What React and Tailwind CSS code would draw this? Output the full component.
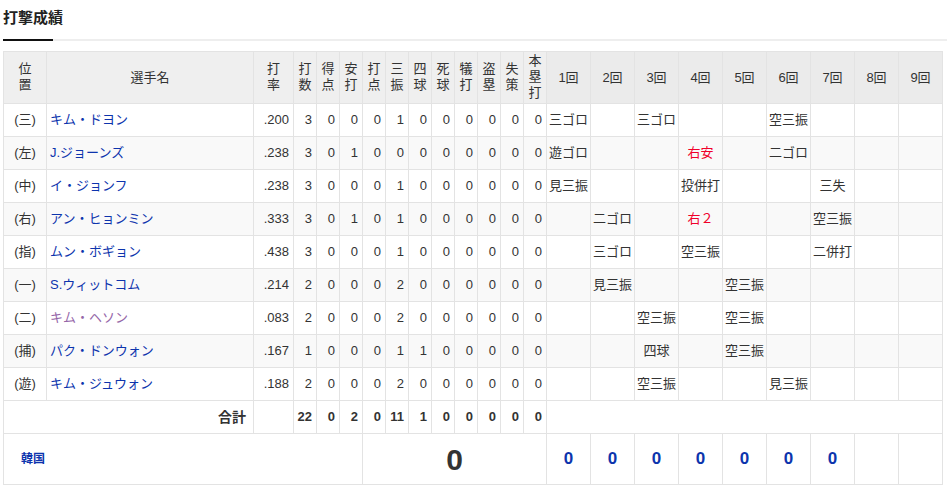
import React from 'react';

const FONT = { fontFamily: '"Liberation Sans", "Noto Sans CJK JP", sans-serif' };

const statHeads = ['打数', '得点', '安打', '打点', '三振', '四球', '死球', '犠打', '盗塁', '失策', '本塁打'];

// pos, name, avg, stats[11], innings {n: text ('*' = red)}, visited
const players = [
  ['(三)', 'キム・ドヨン', '.200', [3, 0, 0, 0, 1, 0, 0, 0, 0, 0, 0], { 1: '三ゴロ', 3: '三ゴロ', 6: '空三振' }],
  ['(左)', 'J.ジョーンズ', '.238', [3, 0, 1, 0, 0, 0, 0, 0, 0, 0, 0], { 1: '遊ゴロ', 4: '*右安', 6: '二ゴロ' }],
  ['(中)', 'イ・ジョンフ', '.238', [3, 0, 0, 0, 1, 0, 0, 0, 0, 0, 0], { 1: '見三振', 4: '投併打', 7: '三失' }],
  ['(右)', 'アン・ヒョンミン', '.333', [3, 0, 1, 0, 1, 0, 0, 0, 0, 0, 0], { 2: '二ゴロ', 4: '*右２', 7: '空三振' }],
  ['(指)', 'ムン・ボギョン', '.438', [3, 0, 0, 0, 1, 0, 0, 0, 0, 0, 0], { 2: '三ゴロ', 4: '空三振', 7: '二併打' }],
  ['(一)', 'S.ウィットコム', '.214', [2, 0, 0, 0, 2, 0, 0, 0, 0, 0, 0], { 2: '見三振', 5: '空三振' }],
  ['(二)', 'キム・ヘソン', '.083', [2, 0, 0, 0, 2, 0, 0, 0, 0, 0, 0], { 3: '空三振', 5: '空三振' }, true],
  ['(捕)', 'パク・ドンウォン', '.167', [1, 0, 0, 0, 1, 1, 0, 0, 0, 0, 0], { 3: '四球', 5: '空三振' }],
  ['(遊)', 'キム・ジュウォン', '.188', [2, 0, 0, 0, 2, 0, 0, 0, 0, 0, 0], { 3: '空三振', 6: '見三振' }],
];

const totals = [22, 0, 2, 0, 11, 1, 0, 0, 0, 0, 0];
const innings = [1, 2, 3, 4, 5, 6, 7, 8, 9];
const runs = ['0', '0', '0', '0', '0', '0', '0', '', ''];

const cell = 'border border-[#e3e3e3]';

function Stacked({ text }) {
  return (
    <span className="inline-block leading-[16px]">
      {text.split('').map((c, i) => (
        <span key={i} className="block">{c}</span>
      ))}
    </span>
  );
}

export default function App() {
  return (
    <div className="w-[951px] h-[485px] bg-white px-[3px] text-[#333]" style={FONT}>
      <h2 className="pt-[8px] text-[15px] font-bold leading-[20px] text-[#222]">打撃成績</h2>
      <div className="mt-[11px] flex h-[2px] w-[944px] bg-[#eeeeee]">
        <div className="h-full w-[50px] bg-[#111]" />
      </div>

      <table className="mt-[10px] w-[940px] table-fixed border-collapse text-[13px]">
        <colgroup>
          <col className="w-[43px]" />
          <col className="w-[207px]" />
          <col className="w-[40px]" />
          {statHeads.map((h) => (
            <col key={h} className="w-[23px]" />
          ))}
          {innings.map((n) => (
            <col key={n} className="w-[44px]" />
          ))}
        </colgroup>
        <thead>
          <tr className="h-[52px] bg-[#efefef]">
            <th className={`${cell} font-normal`}><Stacked text="位置" /></th>
            <th className={`${cell} font-normal`}>選手名</th>
            <th className={`${cell} font-normal`}><Stacked text="打率" /></th>
            {statHeads.map((h) => (
              <th key={h} className={`${cell} font-normal`}><Stacked text={h} /></th>
            ))}
            {innings.map((n) => (
              <th key={n} className={`${cell} bg-[#ebebeb] font-normal`}>{n}回</th>
            ))}
          </tr>
        </thead>
        <tbody>
          {players.map(([pos, name, avg, stats, inn, visited], i) => (
            <tr key={name} className={`h-[33px] ${i % 2 ? 'bg-[#f9f9f9]' : 'bg-white'}`}>
              <td className={`${cell} text-center`}>{pos}</td>
              <td className={`${cell} px-[3px] ${visited ? 'text-[#9566a8]' : 'text-[#0d34ad]'}`}>{name}</td>
              <td className={`${cell} pr-[4px] text-right`}>{avg}</td>
              {stats.map((s, j) => (
                <td key={j} className={`${cell} pr-[4px] text-right`}>{s}</td>
              ))}
              {innings.map((n) => {
                const v = inn[n] || '';
                const red = v.startsWith('*');
                return (
                  <td key={n} className={`${cell} text-center ${red ? 'text-[#f0002a]' : ''}`}>
                    {red ? v.slice(1) : v}
                  </td>
                );
              })}
            </tr>
          ))}
          <tr className="h-[33px] bg-white">
            <td colSpan={2} className={`${cell} pr-[7px] text-right text-[14px] font-bold`}>合計</td>
            <td className={cell}></td>
            {totals.map((t, j) => (
              <td key={j} className={`${cell} pr-[4px] text-right font-bold`}>{t}</td>
            ))}
            <td colSpan={9} className={cell}></td>
          </tr>
          <tr className="h-[51px] bg-white">
            <td colSpan={6} className={`${cell} pl-[17px] text-[12px] font-bold text-[#0d34ad]`}>韓国</td>
            <td colSpan={8} className={`${cell} text-center text-[30px] font-bold text-[#333]`}>0</td>
            {runs.map((r, j) => (
              <td key={j} className={`${cell} text-center text-[17px] font-bold text-[#0d34ad]`}>{r}</td>
            ))}
          </tr>
        </tbody>
      </table>
    </div>
  );
}
